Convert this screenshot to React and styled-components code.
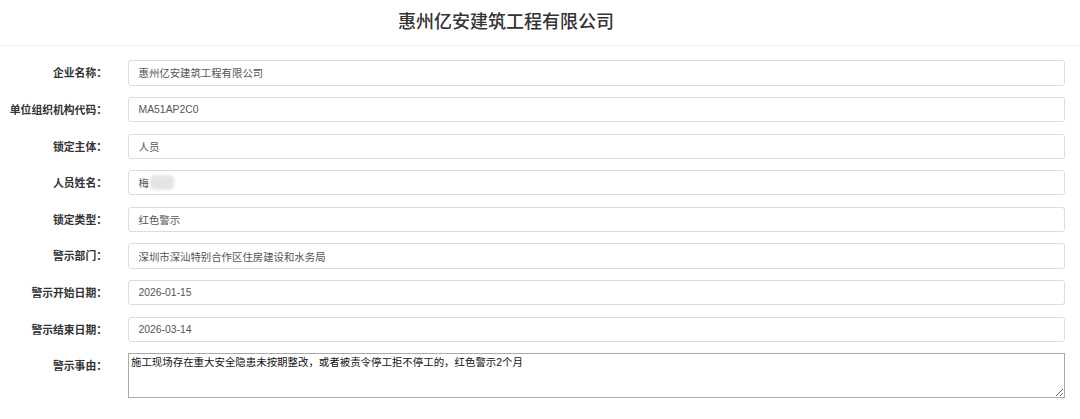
import React from "react";
import styled, { createGlobalStyle } from "styled-components";

const GlobalStyle = createGlobalStyle`
  html, body {
    margin: 0;
    padding: 0;
    background: #ffffff;
    font-family: "Liberation Sans", "Noto Sans CJK SC", sans-serif;
    color: #333;
  }
`;

const Page = styled.div`
  width: 1080px;
  height: 419px;
  overflow: hidden;
  background: #fff;
`;

const Header = styled.header`
  height: 46px;
  box-sizing: border-box;
  border-bottom: 1px solid #f0f0f0;
  display: flex;
  align-items: center;
  justify-content: center;
  padding-right: 68px;
  padding-bottom: 5px;
`;

const Title = styled.h1`
  margin: 0;
  font-family: "Noto Sans CJK SC", sans-serif;
  font-size: 18px;
  font-weight: 500;
  color: #333;
  letter-spacing: 0;
`;

const Form = styled.form`
  display: flex;
  flex-direction: column;
  gap: 11.33px;
  padding: 14.3px 15px 0 0;
`;

const Row = styled.div`
  display: flex;
  align-items: flex-start;
`;

const Label = styled.label`
  flex: 0 0 107px;
  margin-right: 21px;
  text-align: right;
  font-family: "Noto Sans CJK SC", sans-serif;
  font-size: 10.8px;
  font-weight: 700;
  color: #333;
  line-height: 25.3px;
  white-space: nowrap;
`;

const Field = styled.div`
  flex: 1;
  box-sizing: border-box;
  height: 25.3px;
  border: 1px solid #dcdcdc;
  border-radius: 3px;
  padding: 0 9.5px;
  display: flex;
  align-items: center;
  font-size: 10.4px;
  color: #555;
  background: #fff;
  white-space: nowrap;
`;

const Blur = styled.span`
  display: inline-block;
  width: 24px;
  height: 15px;
  margin-left: 1px;
  border-radius: 5px;
  background: #e4e4e4;
  filter: blur(1.5px);
`;

const Area = styled.textarea`
  flex: 1;
  box-sizing: border-box;
  height: 45px;
  margin: 0;
  padding: 2px;
  border: 1px solid #a9a9a9;
  border-radius: 0;
  font-family: "Liberation Sans", "Noto Sans CJK SC", sans-serif;
  font-size: 10.45px;
  line-height: 1.3;
  color: #111;
  background: #fff;
  outline: none;
`;

const rows = [
  ["企业名称：", "惠州亿安建筑工程有限公司"],
  ["单位组织机构代码：", "MA51AP2C0"],
  ["锁定主体：", "人员"],
  ["人员姓名：", "梅", true],
  ["锁定类型：", "红色警示"],
  ["警示部门：", "深圳市深汕特别合作区住房建设和水务局"],
  ["警示开始日期：", "2026-01-15"],
  ["警示结束日期：", "2026-03-14"],
];

export default function App() {
  return (
    <Page>
      <GlobalStyle />
      <Header>
        <Title>惠州亿安建筑工程有限公司</Title>
      </Header>
      <Form onSubmit={(e) => e.preventDefault()}>
        {rows.map(([label, value, blurred]) => (
          <Row key={label}>
            <Label>{label}</Label>
            <Field>
              {value}
              {blurred && <Blur />}
            </Field>
          </Row>
        ))}
        <Row>
          <Label>警示事由：</Label>
          <Area
            readOnly
            value="施工现场存在重大安全隐患未按期整改，或者被责令停工拒不停工的，红色警示2个月"
          />
        </Row>
      </Form>
    </Page>
  );
}
